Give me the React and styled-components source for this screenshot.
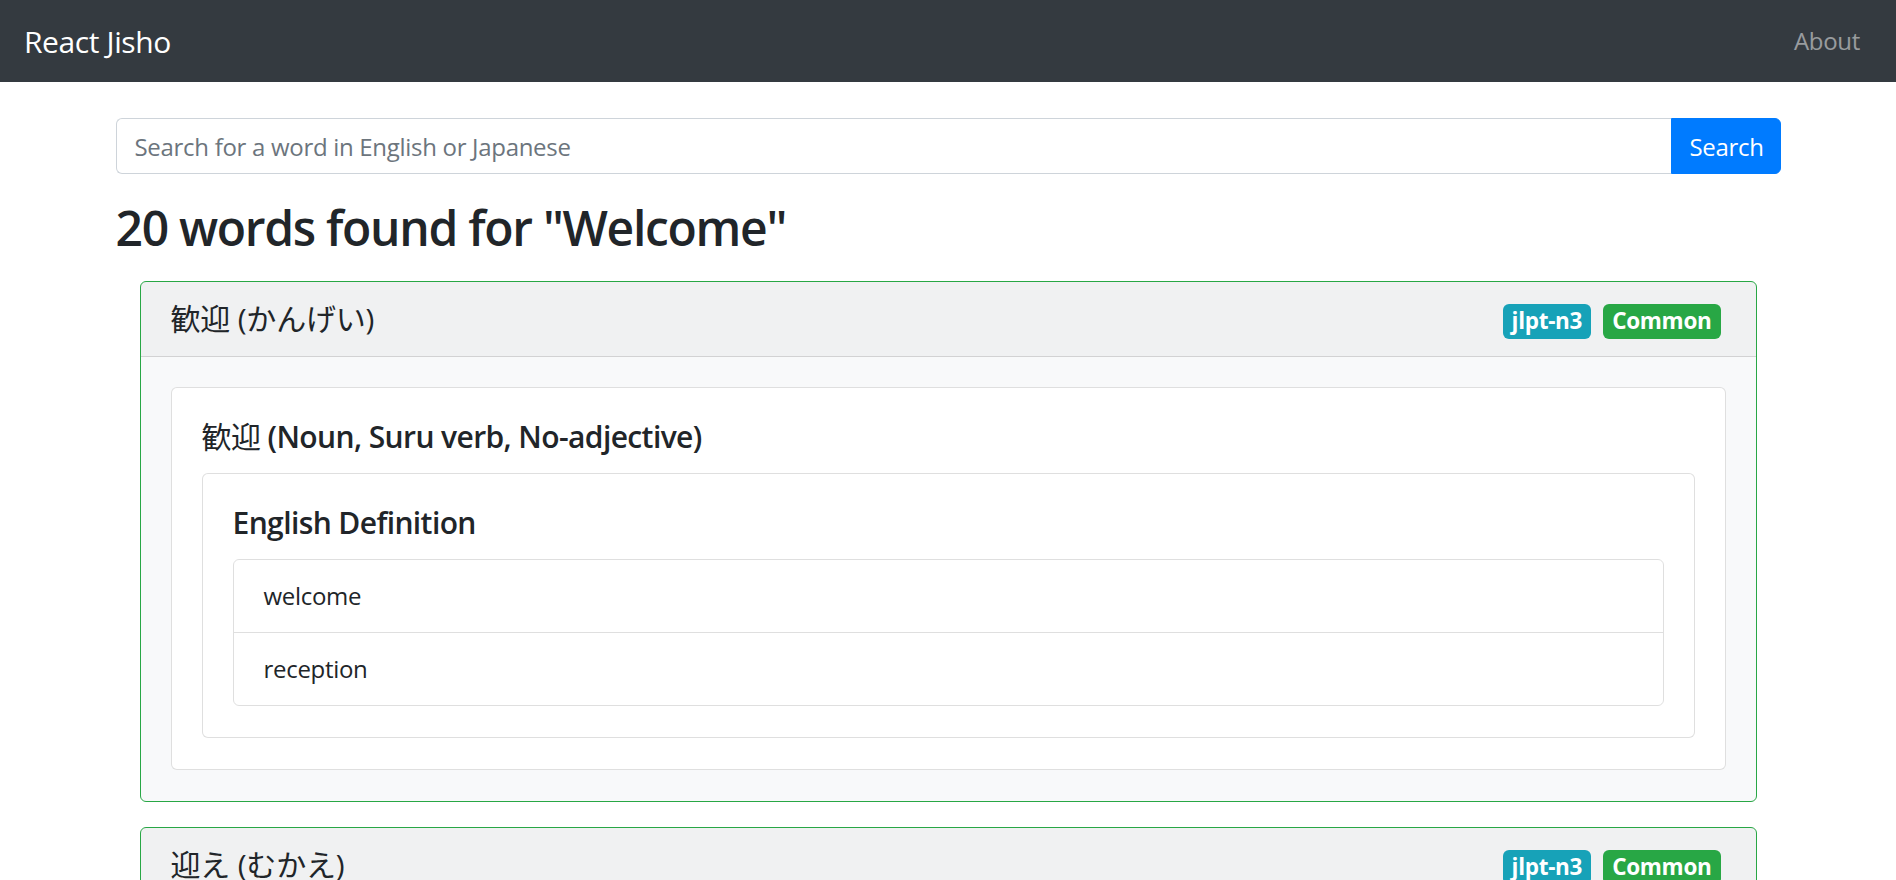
import styled, { createGlobalStyle } from "styled-components";

const GlobalStyle = createGlobalStyle`
    * {
        box-sizing: border-box;
    }
    body {
        margin: 0;
        font-family: "Open Sans", "Noto Sans CJK JP", sans-serif;
        font-size: 24px;
        line-height: 1.5;
        color: #212529;
        background-color: #ffffff;
    }
`;

const Navbar = styled.nav`
    height: 82px;
    padding: 0 24px;
    display: flex;
    align-items: center;
    justify-content: space-between;
    background-color: #343a40;
`;

const Brand = styled.a`
    font-size: 30px;
    line-height: 45px;
    color: #ffffff;
    text-decoration: none;
    letter-spacing: -0.4px;
`;

const NavLink = styled.a`
    padding: 0 12px;
    font-size: 24px;
    color: rgba(255, 255, 255, 0.5);
    text-decoration: none;
    letter-spacing: -0.3px;
`;

const Container = styled.main`
    width: 1665px;
    margin: 36px auto 0;
`;

const SearchGroup = styled.form`
    display: flex;
    height: 56px;
`;

const SearchInput = styled.input`
    flex: 1;
    padding: 9px 18px;
    font-family: inherit;
    font-size: 24px;
    color: #495057;
    border: 1px solid #ced4da;
    border-right: none;
    border-radius: 6px 0 0 6px;
    outline: none;
    letter-spacing: -0.3px;

    &::placeholder {
        color: #6c757d;
    }
`;

const SearchButton = styled.button`
    width: 110px;
    padding: 9px 18px;
    font-family: inherit;
    font-size: 24px;
    color: #ffffff;
    background-color: #007bff;
    border: 1px solid #007bff;
    border-radius: 0 6px 6px 0;
    letter-spacing: -0.3px;
`;

const Heading = styled.h2`
    margin: 25px 0 24px;
    font-size: 48px;
    font-weight: 600;
    line-height: 1.2;
    letter-spacing: -1.3px;
`;

const WordList = styled.div`
    padding: 0 24px;
`;

const WordCard = styled.section`
    margin-bottom: 25px;
    background-color: #f8f9fa;
    border: 1px solid #28a745;
    border-radius: 6px;
    overflow: hidden;
`;

const CardHeader = styled.header`
    padding: 18px 30px;
    display: flex;
    align-items: center;
    justify-content: space-between;
    background-color: rgba(0, 0, 0, 0.03);
    border-bottom: 1px solid rgba(0, 0, 0, 0.125);
`;

const HeaderTitle = styled.div`
    font-size: 30px;
    line-height: 38px;
    letter-spacing: -0.2px;
`;

const Badges = styled.div`
    display: flex;
    gap: 12px;
    margin: 3px 5px -3px 0;
`;

const Badge = styled.span`
    padding: 5px 9px 6px;
    font-size: 22.5px;
    font-weight: 700;
    line-height: 1.05;
    color: #ffffff;
    background-color: ${props => props.bg};
    border-radius: 6px;
    letter-spacing: -0.3px;
`;

const CardBody = styled.div`
    padding: 30px 30px 31px;
`;

const Panel = styled.div`
    padding: 30px 30px 31px;
    background-color: #ffffff;
    border: 1px solid rgba(0, 0, 0, 0.125);
    border-radius: 6px;
`;

const PanelTitle = styled.h5`
    margin: 0 0 18px;
    font-size: 30px;
    font-weight: 600;
    line-height: 37px;
    letter-spacing: -0.6px;
`;

const Kanji = styled.span`
    font-weight: 400;
`;

const ListGroup = styled.ul`
    margin: 0;
    padding: 0;
    list-style: none;
    border: 1px solid rgba(0, 0, 0, 0.125);
    border-radius: 6px;
`;

const ListItem = styled.li`
    padding: 18px 30px;
    letter-spacing: -0.3px;

    & + & {
        border-top: 1px solid rgba(0, 0, 0, 0.125);
    }
`;

const words = [
    {
        word: "歓迎",
        reading: "かんげい",
        tags: ["jlpt-n3"],
        common: true,
        senses: [
            {
                parts: "Noun, Suru verb, No-adjective",
                definitions: ["welcome", "reception"],
            },
        ],
    },
    {
        word: "迎え",
        reading: "むかえ",
        tags: ["jlpt-n3"],
        common: true,
        senses: [
            {
                parts: "Noun",
                definitions: ["meeting", "greeting", "welcome", "someone sent to pick up a person"],
            },
        ],
    },
];

const App = () => {
    return (
        <>
            <GlobalStyle />
            <Navbar>
                <Brand href="#">React Jisho</Brand>
                <NavLink href="#">About</NavLink>
            </Navbar>
            <Container>
                <SearchGroup onSubmit={e => e.preventDefault()}>
                    <SearchInput placeholder="Search for a word in English or Japanese" />
                    <SearchButton type="submit">Search</SearchButton>
                </SearchGroup>
                <Heading>20 words found for "Welcome"</Heading>
                <WordList>
                    {words.map(item => (
                        <WordCard key={item.word}>
                            <CardHeader>
                                <HeaderTitle>
                                    {item.word} ({item.reading})
                                </HeaderTitle>
                                <Badges>
                                    {item.tags.map(tag => (
                                        <Badge key={tag} bg="#17a2b8">{tag}</Badge>
                                    ))}
                                    {item.common && <Badge bg="#28a745">Common</Badge>}
                                </Badges>
                            </CardHeader>
                            <CardBody>
                                {item.senses.map(sense => (
                                    <Panel key={sense.parts}>
                                        <PanelTitle>
                                            <Kanji>{item.word}</Kanji> ({sense.parts})
                                        </PanelTitle>
                                        <Panel>
                                            <PanelTitle>English Definition</PanelTitle>
                                            <ListGroup>
                                                {sense.definitions.map(def => (
                                                    <ListItem key={def}>{def}</ListItem>
                                                ))}
                                            </ListGroup>
                                        </Panel>
                                    </Panel>
                                ))}
                            </CardBody>
                        </WordCard>
                    ))}
                </WordList>
            </Container>
        </>
    );
};

export default App;
